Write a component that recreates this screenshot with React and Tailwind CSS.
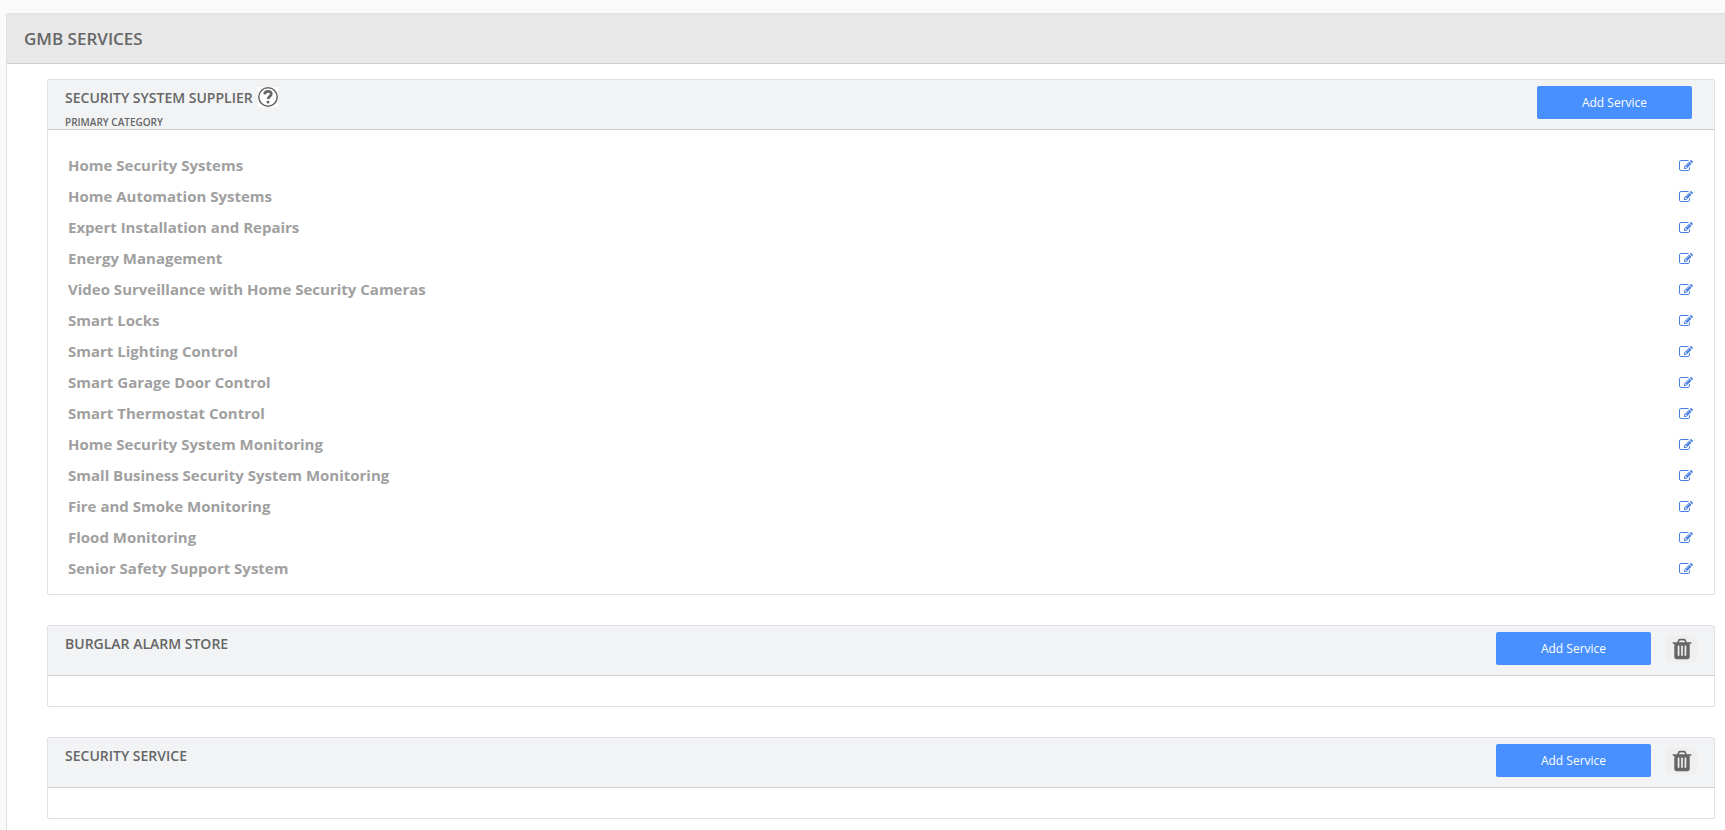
const primaryServices = [
  "Home Security Systems",
  "Home Automation Systems",
  "Expert Installation and Repairs",
  "Energy Management",
  "Video Surveillance with Home Security Cameras",
  "Smart Locks",
  "Smart Lighting Control",
  "Smart Garage Door Control",
  "Smart Thermostat Control",
  "Home Security System Monitoring",
  "Small Business Security System Monitoring",
  "Fire and Smoke Monitoring",
  "Flood Monitoring",
  "Senior Safety Support System",
];

const categories = [
  { name: "SECURITY SYSTEM SUPPLIER", primary: true, services: primaryServices },
  { name: "BURGLAR ALARM STORE", primary: false, services: [] },
  { name: "SECURITY SERVICE", primary: false, services: [] },
];

function EditIcon() {
  return (
    <svg viewBox="0 0 1792 1792" className="size-[14px] fill-current" aria-hidden="true">
      <path d="M888 1184l116-116-152-152-116 116v56h96v96h56zm440-720q-16-16-33 1l-350 350q-17 17-1 33t33-1l350-350q17-17 1-33zm80 594v190q0 119-84.5 203.5t-203.5 84.5h-832q-119 0-203.5-84.5t-84.5-203.5v-832q0-119 84.5-203.5t203.5-84.5h832q63 0 117 25 15 7 18 23 3 17-9 29l-49 49q-14 14-32 8-23-6-45-6h-832q-66 0-113 47t-47 113v832q0 66 47 113t113 47h832q66 0 113-47t47-113v-126q0-13 9-22l64-64q15-15 35-7t20 29zm-96-738l288 288-672 672h-288v-288zm444 132l-92 92-288-288 92-92q28-28 68-28t68 28l152 152q28 28 28 68t-28 68z" />
    </svg>
  );
}

function TrashIcon() {
  return (
    <svg viewBox="0 0 1792 1792" className="size-6 fill-current" aria-hidden="true">
      <path d="M704 1376v-704q0-14-9-23t-23-9h-64q-14 0-23 9t-9 23v704q0 14 9 23t23 9h64q14 0 23-9t9-23zm256 0v-704q0-14-9-23t-23-9h-64q-14 0-23 9t-9 23v704q0 14 9 23t23 9h64q14 0 23-9t9-23zm256 0v-704q0-14-9-23t-23-9h-64q-14 0-23 9t-9 23v704q0 14 9 23t23 9h64q14 0 23-9t9-23zm-544-992h448l-48-117q-7-9-17-11h-317q-10 2-17 11zm928 32v64q0 14-9 23t-23 9h-96v948q0 83-47 143.5t-113 60.5h-832q-66 0-113-58.5t-47-141.5v-952h-96q-14 0-23-9t-9-23v-64q0-14 9-23t23-9h309l70-167q15-37 54-63t79-26h320q40 0 79 26t54 63l70 167h309q14 0 23 9t9 23z" />
    </svg>
  );
}

function HelpIcon() {
  return (
    <svg viewBox="0 0 20 20" className="size-5" fill="none" stroke="#666" aria-hidden="true">
      <rect width="20" height="20" fill="#fff" stroke="none" />
      <circle cx="10" cy="10" r="9.2" strokeWidth="1.5" />
      <path d="M6.6 7.4C6.8 5.4 8 4.4 10 4.4c2 0 3.3 1 3.3 2.7 0 2.2-3.2 2.4-3.2 4.9" strokeWidth="2.6" />
      <circle cx="10" cy="14.9" r="1.5" fill="#666" stroke="none" />
    </svg>
  );
}

function CategoryCard({ name, primary, services }) {
  return (
    <section className="rounded-[2px] border border-[#dfe1e4] bg-white">
      <header
        className={`flex h-[50px] justify-between border-b border-[#cdd0d4] bg-[#f1f3f5] pt-[6px] pl-[17px] ${primary ? "pr-[22px]" : "pr-[17px]"}`}
      >
        <div>
          <div className="flex h-6 items-start gap-[5px]">
            <h2 className="text-[14px] leading-6 font-semibold">{name}</h2>
            {primary && (
              <button type="button" aria-label="Help" className="flex h-[22px] cursor-pointer items-center">
                <HelpIcon />
              </button>
            )}
          </div>
          {primary && <p className="pt-[5px] text-[10px] leading-[14px] font-semibold">PRIMARY CATEGORY</p>}
        </div>
        <div className="flex items-start gap-[15px]">
          <button
            type="button"
            className="h-[33px] w-[155px] cursor-pointer rounded-[2px] bg-[#488fff] text-[12px] text-white"
          >
            Add Service
          </button>
          {!primary && (
            <button
              type="button"
              aria-label={`Delete ${name}`}
              className="mt-1 flex h-[26px] w-[31px] cursor-pointer items-center justify-center bg-[#efefef]"
            >
              <TrashIcon />
            </button>
          )}
        </div>
      </header>
      {services.length > 0 ? (
        <ul className="pt-5 pr-[21px] pb-[10px] pl-5">
          {services.map((service) => (
            <li key={service} className="flex h-[31px] items-center justify-between">
              <span className="text-[15px] font-bold text-[#a0a0a0]">{service}</span>
              <button type="button" aria-label={`Edit ${service}`} className="cursor-pointer text-[#4a7fe0]">
                <EditIcon />
              </button>
            </li>
          ))}
        </ul>
      ) : (
        <div className="h-[30px]" />
      )}
    </section>
  );
}

export default function App() {
  return (
    <div className="min-h-screen overflow-hidden bg-[#fafafa] pt-[13px] pl-[6px] font-['Open_Sans','Noto_Sans',sans-serif] text-[#666]">
      <main className="min-h-[calc(100vh-13px)] rounded-tl-[2px] border-t border-l border-[#dfe1e2] bg-white">
        <div className="flex h-[50px] items-center border-b border-[#cfcfcf] bg-[#e8e8e8] px-[17px]">
          <h1 className="text-[17px] font-semibold">GMB SERVICES</h1>
        </div>
        <div className="flex flex-col gap-[30px] pt-[15px] pr-[10px] pl-10">
          {categories.map((category) => (
            <CategoryCard key={category.name} {...category} />
          ))}
        </div>
      </main>
    </div>
  );
}
